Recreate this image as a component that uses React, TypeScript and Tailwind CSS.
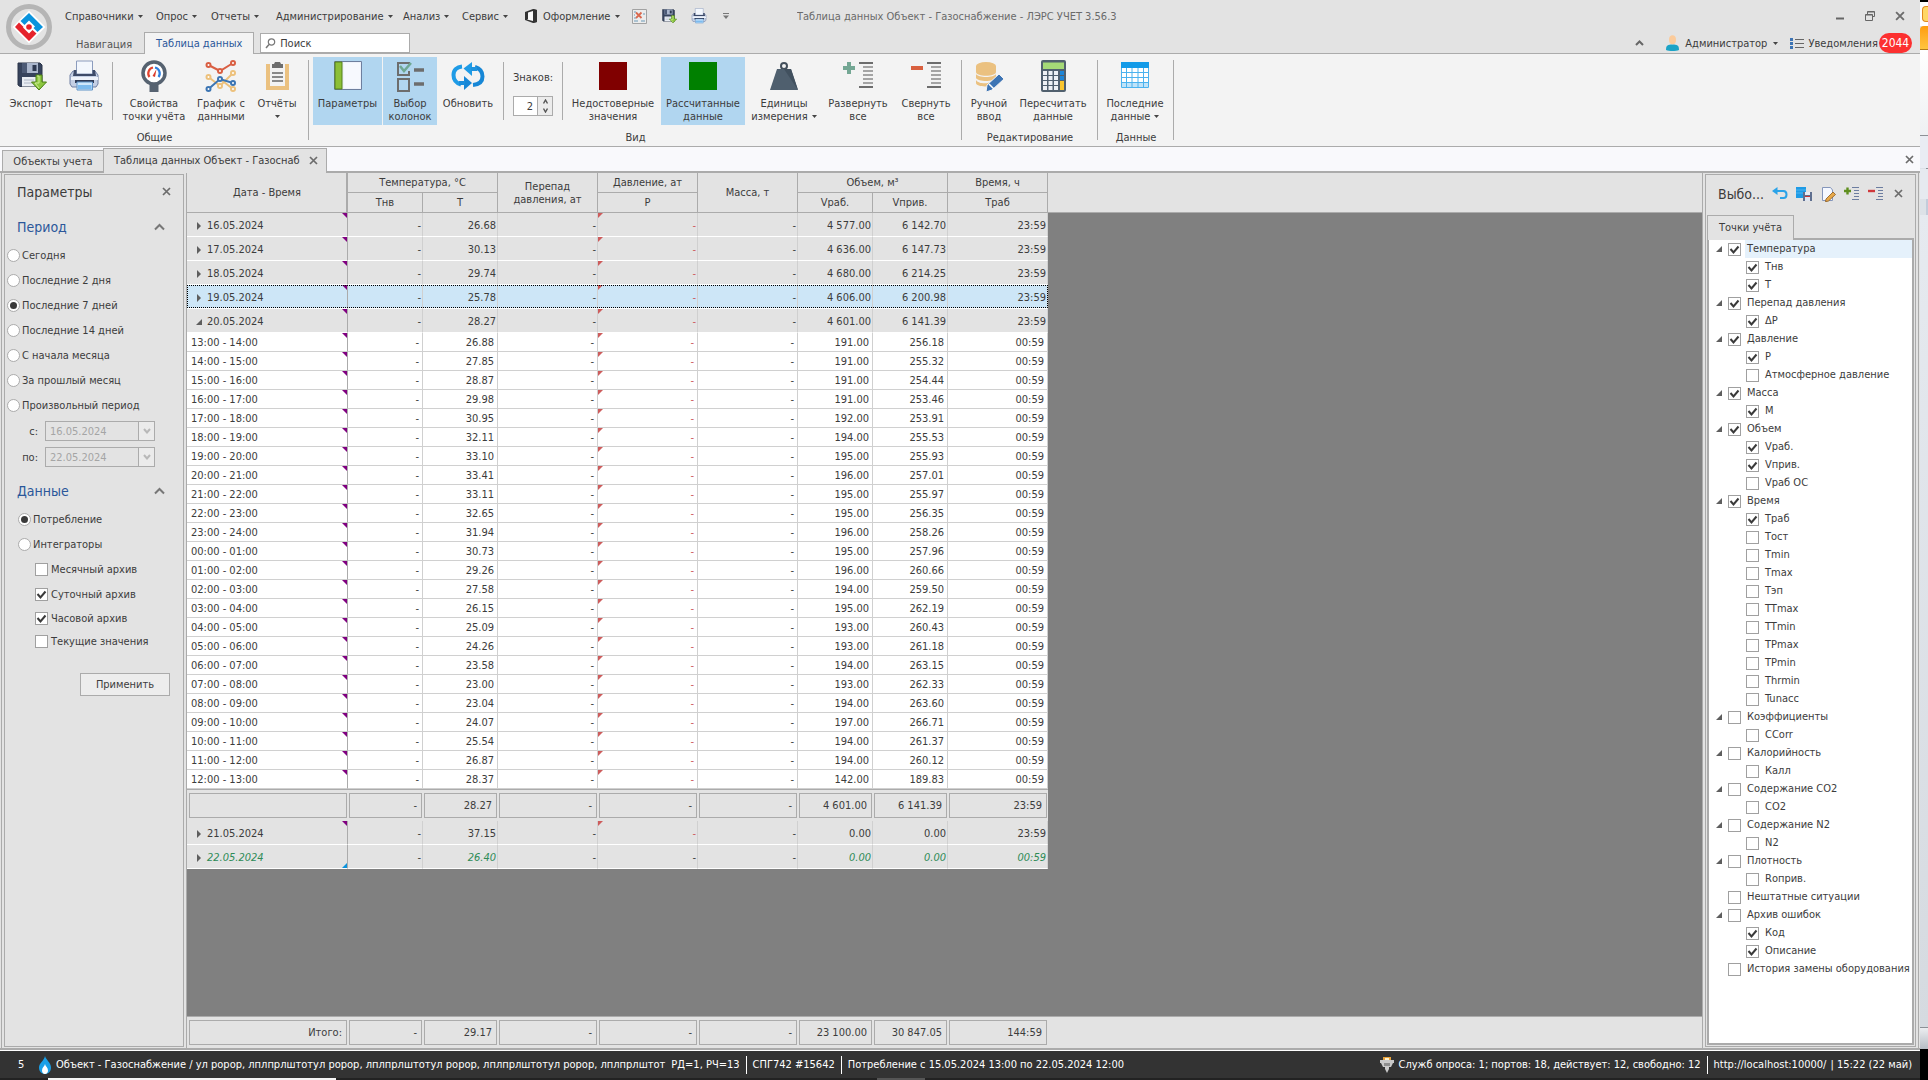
import { ReactNode, useId } from "react";

const FONT = "font-['DejaVu_Sans_Condensed','DejaVu_Sans','Noto_Sans',sans-serif]";

/* ---------- small glyphs ---------- */

function Caret() {
  return (
    <svg width="5" height="3" viewBox="0 0 5 3" className="shrink-0" aria-hidden="true">
      <path d="M0 0h5L2.5 3z" fill="#444" />
    </svg>
  );
}

function Cross({ size = 9 }: { size?: number }) {
  return (
    <svg width={size} height={size} viewBox="0 0 9 9" aria-hidden="true">
      <path d="M1 1l7 7M8 1L1 8" stroke="#6c6c6c" strokeWidth="1.7" fill="none" />
    </svg>
  );
}

function ChevronUp() {
  return (
    <svg width="11" height="8" viewBox="0 0 11 8" aria-hidden="true">
      <path d="M1 6.5L5.5 2 10 6.5" stroke="#777" strokeWidth="2" fill="none" />
    </svg>
  );
}

function Collapsed() {
  return (
    <svg width="5" height="8" viewBox="0 0 5 8" aria-hidden="true">
      <path d="M0 0l4 4-4 4z" fill="#5e5e5e" />
    </svg>
  );
}

function Expanded() {
  return (
    <svg width="6" height="6" viewBox="0 0 6 6" aria-hidden="true">
      <path d="M6 0v6H0z" fill="#5e5e5e" />
    </svg>
  );
}

/* ---------- large icons ---------- */

function LogoIcon() {
  return (
    <svg width="46" height="46" viewBox="0 0 46 46" aria-hidden="true">
      <circle cx="23" cy="23" r="20.5" fill="#e3e3e3" stroke="#b5b5b5" strokeWidth="5" />
      <path d="M23 6.5L39.5 23 23 39.5 6.5 23z" fill="#fff" />
      <path d="M23 9l14 14-5.5 5-4-4 1.5-1.5-6-6-4.5 4.5L14.5 17z" fill="#0a93dd" />
      <path d="M23 37L9 23l4-4.5 4.5 4.5-.5.5 6 6 3.5-3.5 4 3.5z" fill="#e5232c" />
      <circle cx="23" cy="23" r="2.8" fill="#e5232c" />
    </svg>
  );
}

function ExportIcon({ size = 32 }: { size?: number }) {
  return (
    <svg width={size} height={size} viewBox="0 0 32 32" aria-hidden="true">
      <path d="M3 3h22l2 2v21.5H5L3 25z" fill="#36435c" stroke="#2a3449" />
      <path d="M7 3h16v10H7z" fill="#aab6cc" />
      <path d="M7 3h5v10H7z" fill="#4c5a75" />
      <path d="M17.5 5h4v6h-4z" fill="#2d3850" />
      <path d="M7 17h15v9.5H7z" fill="#e9edf3" />
      <path d="M9 20h10M9 23h10" stroke="#b0b8c6" />
      <path d="M21 15h6v7h4.5L24 30l-7.5-8H21z" fill="#8cc63f" stroke="#4a7f16" />
      <path d="M22 16h2v7h-4l4 5" stroke="#cdec97" fill="none" />
    </svg>
  );
}

function PrintIcon({ size = 32 }: { size?: number }) {
  return (
    <svg width={size} height={size} viewBox="0 0 32 32" aria-hidden="true">
      <path d="M5 11h22l3 4v9l-2 3H4l-2-3v-9z" fill="#c4cfe4" stroke="#6f7fa3" />
      <path d="M8.5 1h16v13h-16z" fill="#f3f7fd" stroke="#8c9cbd" />
      <path d="M6 10h2.5v4h16v-4H27l1 6H5z" fill="#3d4a68" />
      <path d="M3 17h27v3H3z" fill="#eef2fa" />
      <path d="M7 20h19v3H7z" fill="#2f3a55" />
      <path d="M9 22h15.5v8H9z" fill="#cfe7fb" stroke="#5f93c8" />
      <path d="M10 25h13.5v4H10z" fill="#7dbbee" />
    </svg>
  );
}

function GaugeIcon() {
  return (
    <svg width="32" height="32" viewBox="0 0 32 32" aria-hidden="true">
      <path d="M11.5 22h9v10h-9z" fill="#566270" />
      <circle cx="16" cy="13" r="11" fill="#fff" stroke="#566270" strokeWidth="3.5" />
      <path d="M11.5 17A6 6 0 0 1 15 7.5" stroke="#e2432f" strokeWidth="2.2" fill="none" />
      <path d="M17 7.5A6 6 0 0 1 20.5 17" stroke="#2e7fe0" strokeWidth="2.2" fill="none" />
      <path d="M14.5 16l4-7-1.5 8z" fill="#d93a2b" />
    </svg>
  );
}

function GraphIcon() {
  return (
    <svg width="32" height="32" viewBox="0 0 32 32" fill="none" strokeWidth="2" aria-hidden="true">
      <path d="M3.5 5L15 11l13-8" stroke="#d95f43" />
      <path d="M3.5 17L15 26l13-13M15 19l13 10" stroke="#edc17c" />
      <path d="M3.5 29L15 19l13 4" stroke="#3c75b3" />
      <g fill="#fff">
        <g stroke="#d95f43"><circle cx="3.5" cy="5" r="2" /><circle cx="15" cy="11" r="2" /><circle cx="28" cy="3" r="2" /></g>
        <g stroke="#edc17c"><circle cx="3.5" cy="17" r="2" /><circle cx="15" cy="26" r="2" /><circle cx="28" cy="13" r="2" /><circle cx="28" cy="29" r="2" /></g>
        <g stroke="#3c75b3"><circle cx="3.5" cy="29" r="2" /><circle cx="15" cy="19" r="2" /><circle cx="28" cy="23" r="2" /></g>
      </g>
    </svg>
  );
}

function ClipboardIcon() {
  return (
    <svg width="32" height="32" viewBox="0 0 32 32" aria-hidden="true">
      <path d="M5 4h23v26H5z" fill="#ebc180" />
      <path d="M9 4h15v22H9z" fill="#f3f3f3" />
      <path d="M11 4h2l1-2h5l1 2h2v4H11z" fill="#6e6e6e" />
      <path d="M11 13h11M11 17h11M11 21h11" stroke="#8a8a8a" strokeWidth="1.8" />
    </svg>
  );
}

function ParamsIcon() {
  return (
    <svg width="32" height="32" viewBox="0 0 32 32" aria-hidden="true">
      <path d="M2.5 1.5h27v28h-27z" fill="#eef2fb" stroke="#6e7f9e" />
      <path d="M3 2h7v27H3z" fill="#8cbf37" stroke="#53801a" />
      <path d="M12 3h16v25H12z" fill="#f7f9fe" />
    </svg>
  );
}

function ColumnsIcon() {
  return (
    <svg width="32" height="32" viewBox="0 0 32 32" fill="none" aria-hidden="true">
      <path d="M15 4V3H4v12h11v-4" stroke="#6d6d6d" strokeWidth="2" />
      <path d="M4 19h11v12H4z" stroke="#6d6d6d" strokeWidth="2" />
      <path d="M6 6l4 5 7-8" stroke="#6fa893" strokeWidth="2.5" />
      <path d="M20 10h10M20 24h10" stroke="#6d6d6d" strokeWidth="3.5" />
    </svg>
  );
}

function RefreshIcon() {
  return (
    <svg width="34" height="32" viewBox="0 0 34 32" aria-hidden="true">
      <path d="M24 7c5 1.5 7.5 5 7.5 9.5 0 5-3.5 8-9.5 8.5" stroke="#1787d6" strokeWidth="4" fill="none" />
      <path d="M10 24.5C5 23 2.5 19.5 2.5 15c0-5 3.5-8 8.5-8.5" stroke="#1e9be6" strokeWidth="4" fill="none" />
      <path d="M21 2v14l-8.5-7.5z" fill="#1e9be6" />
      <path d="M20 7h6v4h-6z" fill="#1e93de" />
      <path d="M13 16v14l8-7z" fill="#1787d6" />
      <path d="M8 21h6v4H8z" fill="#1a8edc" />
    </svg>
  );
}

function Swatch({ tone }: { tone: string }) {
  return <span className={"my-0.5 block h-7 w-7 " + tone} />;
}

function WeightIcon() {
  return (
    <svg width="32" height="32" viewBox="0 0 32 32" aria-hidden="true">
      <circle cx="16" cy="6" r="3" fill="none" stroke="#44505c" strokeWidth="2" />
      <path d="M9 9h14l7 21H2z" fill="#4f5f6e" />
      <path d="M16 9h7l7 21z" fill="#41505e" />
    </svg>
  );
}

function TreeLevels({ open }: { open: boolean }) {
  return (
    <svg width="32" height="32" viewBox="0 0 32 32" fill="none" aria-hidden="true">
      {open ? (
        <path d="M1 8h12M7 2v12" stroke="#74a794" strokeWidth="4" />
      ) : (
        <path d="M1 8h12" stroke="#d9603f" strokeWidth="4" />
      )}
      <path d="M17 3h14M17 27h14" stroke="#6d6d6d" strokeWidth="2" />
      <path d="M21 7h10M21 11h10M21 15h10M21 19h10M21 23h10" stroke="#8b8b8b" strokeWidth="1.6" />
    </svg>
  );
}

function ManualIcon() {
  return (
    <svg width="32" height="32" viewBox="0 0 32 32" aria-hidden="true">
      <path d="M3 6v6c0 5 20 5 20 0V6z" fill="#ebc180" />
      <ellipse cx="13" cy="6" rx="10" ry="4" fill="#ebc180" />
      <path d="M3 14c2 4 18 4 20 0v4c-2 4-18 4-20 0z" fill="#ebc180" />
      <path d="M3 20c2 4 12 4 14 2l-1 4c-5 1-13 0-13-3z" fill="#ebc180" />
      <path d="M14 25L26 14l5 5-12 11-6 2z" fill="#3d74b4" stroke="#f3f3f3" />
      <path d="M16 24l5 5" stroke="#fff" strokeWidth="1.5" />
    </svg>
  );
}

function CalculatorIcon() {
  return (
    <svg width="32" height="32" viewBox="0 0 32 32" aria-hidden="true">
      <rect x="4" y="0" width="25" height="32" rx="2" fill="#51606e" />
      <path d="M6 2.5h21V9H6z" fill="#a5d977" />
      <g fill="#eef1f4">
        {[11, 16, 21, 26].map((y) => (
          <g key={y}>
            <path d={"M6 " + y + "h4v4H6z"} />
            <path d={"M11.5 " + y + "h4v4h-4z"} />
            <path d={"M17 " + y + "h4v4h-4z"} />
          </g>
        ))}
      </g>
      <path d="M23 11h4v4h-4zM23 16h4v4h-4z" fill="#1d86d9" />
      <path d="M23 21h4v9h-4z" fill="#fbc62f" />
    </svg>
  );
}

function TableIcon() {
  return (
    <svg width="32" height="32" viewBox="0 0 32 32" aria-hidden="true">
      <path d="M2 2h28v26H2z" fill="#fff" />
      <path d="M2 2h28v6H2z" fill="#139be8" />
      <path d="M2.5 8v19.5h27V8M2 12.5h28M2 17.5h28M2 22.5h28M7.5 8v20M13 8v20M19 8v20M24.5 8v20" stroke="#4bb2ee" fill="none" />
      <path d="M3 23h26v4H3z" fill="#bfe3f9" />
      <path d="M7.5 23v4M13 23v4M19 23v4M24.5 23v4" stroke="#4bb2ee" />
    </svg>
  );
}

/* ---------- ribbon ---------- */

function RibbonButton({ icon, lines, width, active, drop }: { icon: ReactNode; lines: string[]; width: string; active?: boolean; drop?: boolean }) {
  return (
    <button type="button" className={"flex h-[68px] shrink-0 flex-col items-center pt-[3px] leading-[13px] " + width + (active ? " bg-[#b1d6f0]" : "")}>
      <span className="mb-[5px] flex h-8 items-start justify-center">{icon}</span>
      <span className="whitespace-nowrap">{lines[0]}</span>
      <span className="flex h-[13px] items-center gap-1 whitespace-nowrap">
        {lines[1]}
        {drop && <Caret />}
      </span>
    </button>
  );
}

function RibbonGroup({ label, width, children }: { label: string; width: string; children: ReactNode }) {
  return (
    <section className={"relative flex shrink-0 flex-col pt-[3px] " + width}>
      <div className="flex">{children}</div>
      <h2 className="mt-1.5 text-center leading-[13px]">{label}</h2>
      <span className="absolute right-0 top-1.5 h-20 w-px bg-[#ababab]" />
    </section>
  );
}

function InnerSep({ className }: { className: string }) {
  return <span className={"mt-[5px] h-[58px] w-px shrink-0 bg-[#ababab] " + className} />;
}

function Ribbon() {
  return (
    <div className="flex h-[93px] shrink-0 overflow-hidden border-b border-[#ababab] bg-[#f3f3f3]">
      <RibbonGroup label="Общие" width="w-[309px]">
        <RibbonButton icon={<ExportIcon />} lines={["Экспорт"]} width="ml-1 w-[54px]" />
        <RibbonButton icon={<PrintIcon />} lines={["Печать"]} width="w-[52px]" />
        <InnerSep className="mx-0.5" />
        <RibbonButton icon={<GaugeIcon />} lines={["Свойства", "точки учёта"]} width="w-[78px]" />
        <RibbonButton icon={<GraphIcon />} lines={["График с", "данными"]} width="w-14" />
        <RibbonButton icon={<ClipboardIcon />} lines={["Отчёты"]} drop width="w-14" />
      </RibbonGroup>
      <RibbonGroup label="Вид" width="w-[653px]">
        <RibbonButton icon={<ParamsIcon />} lines={["Параметры"]} active width="ml-1 w-[69px]" />
        <RibbonButton icon={<ColumnsIcon />} lines={["Выбор", "колонок"]} active width="ml-px w-[54px]" />
        <RibbonButton icon={<RefreshIcon />} lines={["Обновить"]} width="w-[62px]" />
        <InnerSep className="ml-1" />
        <div className="flex w-[58px] flex-col pl-[9px]">
          <label htmlFor="digits" className="mt-3.5 leading-[13px]">Знаков:</label>
          <div className="mt-3 flex h-5 w-10 border border-[#ababab] bg-white">
            <input id="digits" defaultValue="2" className="w-[23px] bg-transparent pr-1 text-right outline-none" />
            <div className="flex flex-1 flex-col items-center justify-around border-l border-[#ababab] bg-[#ececec]">
              <button type="button" aria-label="Больше" className="leading-none">
                <svg width="5" height="5" viewBox="0 0 5 5"><path d="M.5 4.5l2-3.5 2 3.5" stroke="#555" strokeWidth="1.4" fill="none" /></svg>
              </button>
              <button type="button" aria-label="Меньше" className="leading-none">
                <svg width="5" height="5" viewBox="0 0 5 5"><path d="M.5.5l2 3.5 2-3.5" stroke="#555" strokeWidth="1.4" fill="none" /></svg>
              </button>
            </div>
          </div>
        </div>
        <InnerSep className="mr-0.5" />
        <RibbonButton icon={<Swatch tone="bg-[#800000]" />} lines={["Недостоверные", "значения"]} width="w-24" />
        <RibbonButton icon={<Swatch tone="bg-[#008000]" />} lines={["Рассчитанные", "данные"]} active width="w-[84px]" />
        <RibbonButton icon={<WeightIcon />} lines={["Единицы", "измерения"]} drop width="w-[78px]" />
        <RibbonButton icon={<TreeLevels open />} lines={["Развернуть", "все"]} width="w-[70px]" />
        <RibbonButton icon={<TreeLevels open={false} />} lines={["Свернуть", "все"]} width="w-[66px]" />
      </RibbonGroup>
      <RibbonGroup label="Редактирование" width="w-[136px]">
        <RibbonButton icon={<ManualIcon />} lines={["Ручной", "ввод"]} width="w-[54px]" />
        <RibbonButton icon={<CalculatorIcon />} lines={["Пересчитать", "данные"]} width="w-[74px]" />
      </RibbonGroup>
      <RibbonGroup label="Данные" width="w-[76px]">
        <RibbonButton icon={<TableIcon />} lines={["Последние", "данные"]} drop width="w-[74px]" />
      </RibbonGroup>
    </div>
  );
}

/* ---------- title bar ---------- */

const MENU: [string, string][] = [
  ["Справочники", "w-[91px]"],
  ["Опрос", "w-[55px]"],
  ["Отчеты", "w-[65px]"],
  ["Администрирование", "w-[127px]"],
  ["Анализ", "w-[59px]"],
  ["Сервис", "w-[63px]"],
];

function TitleBar() {
  return (
    <header className="flex h-[54px] shrink-0 border-b border-[#ababab] bg-[#e3e3e3]">
      <button type="button" aria-label="ЛЭРС УЧЕТ" className="ml-1.5 mt-1 size-[46px] shrink-0">
        <LogoIcon />
      </button>
      <div className="flex min-w-0 flex-1 flex-col">
        <div className="flex h-8 items-center">
          <nav className="ml-[13px] flex shrink-0">
            {MENU.map(([name, width]) => (
              <button key={name} type="button" className={"flex items-center gap-1 whitespace-nowrap " + width}>
                {name}
                <Caret />
              </button>
            ))}
            <button type="button" className="flex w-[107px] items-center gap-[5px] whitespace-nowrap">
              <svg width="13" height="14" viewBox="0 0 13 14" aria-hidden="true">
                <path d="M0 3l8-3 4 1v12l-4 1-8-3V3z" fill="#333" />
                <path d="M3 3.5L8 2v10l-6-1.5 1-.5z" fill="#fafafa" />
                <path d="M8 0l4 1v12l-4 1z" fill="#333" />
              </svg>
              Оформление
              <Caret />
            </button>
          </nav>
          <div className="flex shrink-0 items-center gap-3.5">
            <button type="button" aria-label="Закрыть отчёты">
              <svg width="15" height="15" viewBox="0 0 15 15"><path d="M.5.5h14v14H.5z" fill="#ececec" stroke="#a2a2a2" /><path d="M4 3.5L9.5 9M9.5 3.5L4 9" stroke="#d9694f" strokeWidth="1.8" /><path d="M2 3h2M2 6h1M2 9h2M2 12h4M9 12h4M11 5h2" stroke="#6b9ab8" /></svg>
            </button>
            <button type="button" aria-label="Экспорт"><ExportIcon size={16} /></button>
            <button type="button" aria-label="Печать"><PrintIcon size={16} /></button>
            <button type="button" aria-label="Настройка панели" className="ml-0.5">
              <svg width="6" height="6" viewBox="0 0 6 6"><path d="M0 .5h6" stroke="#777" /><path d="M0 2.5h6L3 6z" fill="#777" /></svg>
            </button>
          </div>
          <h1 className="ml-[68px] truncate text-[#6a6a6a]">Таблица данных Объект - Газоснабжение - ЛЭРС УЧЕТ 3.56.3</h1>
          <div className="ml-auto flex shrink-0 items-center gap-5 pr-[15px]">
            <button type="button" aria-label="Свернуть окно">
              <svg width="10" height="10" viewBox="0 0 10 10"><path d="M1 7.5h8" stroke="#666" strokeWidth="2" /></svg>
            </button>
            <button type="button" aria-label="Восстановить окно">
              <svg width="10" height="10" viewBox="0 0 10 10"><path d="M2.5 3V.5h7v5h-2M.5 3.5h7v6h-7zM.5 4h7M2.5 1h7" stroke="#666" fill="none" /></svg>
            </button>
            <button type="button" aria-label="Закрыть окно"><Cross size={10} /></button>
          </div>
        </div>
        <div className="flex h-[21px] items-end">
          <button type="button" className="ml-6 pb-0.5 leading-[13px] text-[#555]">Навигация</button>
          <button type="button" className="relative -mb-px ml-3 h-[22px] w-[110px] shrink-0 border border-b-0 border-[#ababab] bg-[#f3f3f3] text-[#2b579a]">
            Таблица данных
          </button>
          <label className="ml-1.5 flex h-5 w-[150px] shrink-0 items-center gap-1 border border-[#ababab] bg-white px-1">
            <svg width="11" height="11" viewBox="0 0 11 11" fill="none" aria-hidden="true"><circle cx="6.5" cy="4" r="3.2" stroke="#777" strokeWidth="1.2" /><path d="M4 6.5L1 10" stroke="#777" strokeWidth="1.5" /></svg>
            <input placeholder="Поиск" aria-label="Поиск" className="min-w-0 flex-1 bg-transparent outline-none placeholder:text-[#3c3c3c]" />
          </label>
          <div className="ml-auto flex shrink-0 items-center pr-2">
            <button type="button" aria-label="Свернуть ленту" className="mr-[22px]">
              <svg width="9" height="6" viewBox="0 0 9 6"><path d="M1 5l3.5-3.5L8 5" stroke="#666" strokeWidth="2" fill="none" /></svg>
            </button>
            <button type="button" className="mr-3 flex items-center gap-1.5">
              <svg width="13" height="16" viewBox="0 0 13 16" aria-hidden="true"><path d="M0 15c0-5 2-5.5 6.5-5.5S13 10 13 15c-3 1.300-10 1.300-13 0z" fill="#1ba3c6" /><ellipse cx="6.5" cy="4.8" rx="3.5" ry="4.5" fill="#fbcb9b" /></svg>
              Администратор
              <Caret />
            </button>
            <button type="button" className="flex items-center">
              <svg width="14" height="11" viewBox="0 0 14 11" className="mr-1" aria-hidden="true"><path d="M5 1.5h9M5 5.5h9M5 9.5h9" stroke="#666" /><path d="M0 0h3v3H0zM0 4h3v3H0zM0 8h3v3H0z" fill="#3d74b4" /></svg>
              Уведомления
              <span className="ml-px flex h-5 w-[33px] items-center justify-center rounded-full bg-[#fc3030] text-xs text-white">2044</span>
            </button>
          </div>
        </div>
      </div>
    </header>
  );
}

function DocumentTabs() {
  return (
    <div className="flex h-6 shrink-0 items-end bg-[#f9f9fc] pl-0.5">
      <button type="button" className="h-[21px] w-[102px] shrink-0 border border-b-0 border-[#ababab] bg-[#e3e3e3]">Объекты учета</button>
      <div className="relative -mb-0.5 -ml-px flex h-[25px] w-[224px] shrink-0 items-center border border-b-0 border-[#ababab] bg-[#e3e3e3] pb-0.5 pl-2.5">
        <button type="button" className="whitespace-nowrap">Таблица данных Объект - Газоснаб</button>
        <button type="button" aria-label="Закрыть вкладку" className="ml-auto mr-2"><Cross /></button>
      </div>
      <button type="button" aria-label="Закрыть документ" className="mb-[7px] ml-auto mr-1.5"><Cross /></button>
    </div>
  );
}

/* ---------- form controls ---------- */

function CheckBox({ id, checked }: { id: string; checked: boolean }) {
  return (
    <span className="relative block size-[13px] shrink-0">
      <input id={id} type="checkbox" defaultChecked={checked} className="peer block size-[13px] appearance-none border border-[#a0a0a0] bg-white" />
      <svg viewBox="0 0 13 13" className="pointer-events-none absolute inset-0 hidden size-[13px] peer-checked:block" aria-hidden="true">
        <path d="M2.5 6l3 3.5 5-6" stroke="#3a3a3a" strokeWidth="2" fill="none" />
      </svg>
    </span>
  );
}

function CheckRow({ label, checked, height }: { label: string; checked: boolean; height: string }) {
  const id = useId();
  return (
    <div className={"flex items-center gap-[3px] pl-[30px] " + height}>
      <CheckBox id={id} checked={checked} />
      <label htmlFor={id}>{label}</label>
    </div>
  );
}

function RadioRow({ name, label, checked, indent }: { name: string; label: string; checked?: boolean; indent: string }) {
  const id = useId();
  return (
    <div className={"flex h-[25px] items-center gap-0.5 " + indent}>
      <span className="relative block size-[13px] shrink-0">
        <input id={id} type="radio" name={name} defaultChecked={checked} className="peer block size-[13px] appearance-none rounded-full border border-[#ababab] bg-white" />
        <span className="pointer-events-none absolute inset-[3px] hidden rounded-full bg-[#3a3a3a] peer-checked:block" />
      </span>
      <label htmlFor={id}>{label}</label>
    </div>
  );
}

function DateRow({ label, value }: { label: string; value: string }) {
  const id = useId();
  return (
    <div className="flex h-[26px] items-center">
      <label htmlFor={id} className="mr-[7px] w-[33px] text-right">{label}</label>
      <div className="flex h-5 w-[110px] border border-[#ababab]">
        <input id={id} disabled defaultValue={value} className="w-[92px] bg-transparent pl-1 text-[#a5a5a5]" />
        <button type="button" disabled aria-label="Выбрать дату" className="flex flex-1 items-center justify-center border-l border-[#ababab] bg-[#ebebeb]">
          <svg width="8" height="6" viewBox="0 0 8 6"><path d="M1 1l3 3.5L7 1" stroke="#b8b8b8" strokeWidth="2" fill="none" /></svg>
        </button>
      </div>
    </div>
  );
}

function SectionHead({ title, className }: { title: string; className: string }) {
  return (
    <div className={"flex h-8 items-center justify-between pl-3 pr-[18px] text-sm text-[#2b579a] " + className}>
      <h3>{title}</h3>
      <button type="button" aria-label={"Свернуть " + title}><ChevronUp /></button>
    </div>
  );
}

function ParametersPanel() {
  const periods = ["Сегодня", "Последние 2 дня", "Последние 7 дней", "Последние 14 дней", "С начала месяца", "За прошлый месяц", "Произвольный период"];
  return (
    <aside className="ml-px flex w-[185px] shrink-0 border-l border-[#ababab] px-0.5 py-px">
      <form className="w-[180px] border border-[#ababab]" onSubmit={(e) => e.preventDefault()}>
        <div className="flex h-[33px] items-center justify-between px-3">
          <h2 className="text-sm">Параметры</h2>
          <button type="button" aria-label="Закрыть параметры"><Cross /></button>
        </div>
        <SectionHead title="Период" className="mt-[3px]" />
        {periods.map((p) => (
          <RadioRow key={p} name="period" label={p} checked={p === "Последние 7 дней"} indent="pl-0.5" />
        ))}
        <DateRow label="с:" value="16.05.2024" />
        <DateRow label="по:" value="22.05.2024" />
        <SectionHead title="Данные" className="mt-[5px]" />
        <RadioRow name="kind" label="Потребление" checked indent="pl-[13px]" />
        <RadioRow name="kind" label="Интеграторы" indent="pl-[13px]" />
        <CheckRow label="Месячный архив" checked={false} height="h-[25px]" />
        <CheckRow label="Суточный архив" checked height="h-[25px]" />
        <CheckRow label="Часовой архив" checked height="h-[23px]" />
        <CheckRow label="Текущие значения" checked={false} height="h-[23px]" />
        <button type="submit" className="ml-[75px] mt-5 h-[23px] w-[90px] border border-[#ababab] bg-[#ededed]">Применить</button>
      </form>
    </aside>
  );
}

/* ---------- data grid ---------- */

const HOURS: [string, string, string, string][] = [
  ["13:00 - 14:00", "26.88", "191.00", "256.18"],
  ["14:00 - 15:00", "27.85", "191.00", "255.32"],
  ["15:00 - 16:00", "28.87", "191.00", "254.44"],
  ["16:00 - 17:00", "29.98", "191.00", "253.46"],
  ["17:00 - 18:00", "30.95", "192.00", "253.91"],
  ["18:00 - 19:00", "32.11", "194.00", "255.53"],
  ["19:00 - 20:00", "33.10", "195.00", "255.93"],
  ["20:00 - 21:00", "33.41", "196.00", "257.01"],
  ["21:00 - 22:00", "33.11", "195.00", "255.97"],
  ["22:00 - 23:00", "32.65", "195.00", "256.35"],
  ["23:00 - 24:00", "31.94", "196.00", "258.26"],
  ["00:00 - 01:00", "30.73", "195.00", "257.96"],
  ["01:00 - 02:00", "29.26", "196.00", "260.66"],
  ["02:00 - 03:00", "27.58", "194.00", "259.50"],
  ["03:00 - 04:00", "26.15", "195.00", "262.19"],
  ["04:00 - 05:00", "25.09", "193.00", "260.43"],
  ["05:00 - 06:00", "24.26", "193.00", "261.18"],
  ["06:00 - 07:00", "23.58", "194.00", "263.15"],
  ["07:00 - 08:00", "23.00", "193.00", "262.33"],
  ["08:00 - 09:00", "23.04", "194.00", "263.60"],
  ["09:00 - 10:00", "24.07", "197.00", "266.71"],
  ["10:00 - 11:00", "25.54", "194.00", "261.37"],
  ["11:00 - 12:00", "26.87", "194.00", "260.12"],
  ["12:00 - 13:00", "28.37", "142.00", "189.83"],
];

function Columns() {
  return (
    <colgroup>
      <col className="w-[161px]" />
      <col className="w-[75px]" />
      <col className="w-[75px]" />
      <col className="w-[100px]" />
      <col className="w-[100px]" />
      <col className="w-[100px]" />
      <col className="w-[75px]" />
      <col className="w-[75px]" />
      <col className="w-[100px]" />
      <col />
    </colgroup>
  );
}

function DateMark() {
  return <span className="absolute right-0 top-0 size-[5px] bg-[#800080] [clip-path:polygon(0_0,100%_0,100%_100%)]" />;
}

function PressureMark() {
  return <span className="absolute left-0 top-0 size-[5px] bg-[#cd5c5c] [clip-path:polygon(0_0,100%_0,0_100%)]" />;
}

type Day = { date: string; t: string; v: string; vn: string; time: string; open?: boolean; selected?: boolean; partial?: boolean };

function DayRow({ d }: { d: Day }) {
  const cell = "h-6 border-b border-r border-b-white border-r-[#d0d0d0] px-px pb-0 pt-0.5 text-right";
  const tone = d.partial ? "italic text-[#2e8b57]" : "";
  return (
    <tr className={d.selected ? "bg-[#cde6f7]" : "bg-[#e3e3e3]"}>
      <th scope="row" className="relative h-6 border-b border-r border-b-white border-r-[#ababab] p-0 pt-0.5 text-left font-normal">
        <span className="flex items-center">
          <span className={"flex w-5 items-center " + (d.open ? "pl-[9px]" : "pl-2.5")}>{d.open ? <Expanded /> : <Collapsed />}</span>
          <span className={tone}>{d.date}</span>
        </span>
        {d.partial ? (
          <span className="absolute bottom-0 right-0 size-[5px] bg-[#0a93dd] [clip-path:polygon(100%_0,100%_100%,0_100%)]" />
        ) : (
          <DateMark />
        )}
        {d.selected && <span className="pointer-events-none absolute left-0 top-0 z-10 h-[23px] w-[861px] border border-dotted border-black" />}
      </th>
      <td className={cell}>-</td>
      <td className={cell + " " + tone}>{d.t}</td>
      <td className={cell}>-</td>
      <td className={cell + " relative" + (d.partial ? "" : " text-[#cd5c5c]")}>
        -{!d.partial && <PressureMark />}
      </td>
      <td className={cell}>-</td>
      <td className={cell + " " + tone}>{d.v}</td>
      <td className={cell + " " + tone}>{d.vn}</td>
      <td className={cell + " " + tone}>{d.time}</td>
      <td className="bg-[#808080] p-0" />
    </tr>
  );
}

function HourRow({ h }: { h: [string, string, string, string] }) {
  const cell = "h-[19px] border-b border-r border-[#d0d0d0] p-0 pr-[3px] text-right";
  return (
    <tr className="bg-white">
      <th scope="row" className="relative h-[19px] border-b border-r border-b-[#d0d0d0] border-r-[#ababab] p-0 pl-1 text-left font-normal">
        {h[0]}
        <DateMark />
      </th>
      <td className={cell}>-</td>
      <td className={cell}>{h[1]}</td>
      <td className={cell}>-</td>
      <td className={cell + " relative text-[#cd5c5c]"}>
        -<PressureMark />
      </td>
      <td className={cell}>-</td>
      <td className={cell}>{h[2]}</td>
      <td className={cell}>{h[3]}</td>
      <td className={cell}>00:59</td>
      <td className="bg-[#808080] p-0" />
    </tr>
  );
}

function SummaryRow({ values, tail }: { values: string[]; tail: string }) {
  return (
    <tr className="bg-[#e3e3e3]">
      {values.map((v, i) => (
        <td key={i} className={"h-8 border-t border-t-[#ababab] py-0 pr-px text-right " + (i === 0 ? "pl-0.5" : "pl-px")}>
          <div className="h-[25px] border border-[#ababab] pr-1 leading-[23px]">{v}</div>
        </td>
      ))}
      <td className={"p-0 " + tail} />
    </tr>
  );
}

function DataGrid() {
  const head = "h-5 border-b border-r border-[#ababab] p-0 font-normal";
  return (
    <main className="flex min-w-0 flex-1 flex-col border-l border-[#ababab] bg-[#808080]">
      <div className="flex-1">
        <table className="w-full table-fixed border-separate border-spacing-0 leading-[13px]">
          <Columns />
          <thead className="bg-[#e3e3e3]">
            <tr>
              <th rowSpan={2} scope="col" className={head + " shadow-[inset_-1px_0_#ababab]"}>Дата - Время</th>
              <th colSpan={2} scope="colgroup" className={head}>Температура, °C</th>
              <th rowSpan={2} scope="col" className={head}>Перепад<br />давления, ат</th>
              <th scope="colgroup" className={head}>Давление, ат</th>
              <th rowSpan={2} scope="col" className={head}>Масса, т</th>
              <th colSpan={2} scope="colgroup" className={head}>Объем, м³</th>
              <th scope="colgroup" className={head}>Время, ч</th>
              <td rowSpan={2} className="border-b border-[#ababab] p-0" />
            </tr>
            <tr>
              <th scope="col" className={head}>Tнв</th>
              <th scope="col" className={head}>T</th>
              <th scope="col" className={head}>P</th>
              <th scope="col" className={head}>Vраб.</th>
              <th scope="col" className={head}>Vприв.</th>
              <th scope="col" className={head}>Tраб</th>
            </tr>
          </thead>
          <tbody>
            <DayRow d={{ date: "16.05.2024", t: "26.68", v: "4 577.00", vn: "6 142.70", time: "23:59" }} />
            <DayRow d={{ date: "17.05.2024", t: "30.13", v: "4 636.00", vn: "6 147.73", time: "23:59" }} />
            <DayRow d={{ date: "18.05.2024", t: "29.74", v: "4 680.00", vn: "6 214.25", time: "23:59" }} />
            <DayRow d={{ date: "19.05.2024", t: "25.78", v: "4 606.00", vn: "6 200.98", time: "23:59", selected: true }} />
            <DayRow d={{ date: "20.05.2024", t: "28.27", v: "4 601.00", vn: "6 141.39", time: "23:59", open: true }} />
            {HOURS.map((h) => (
              <HourRow key={h[0]} h={h} />
            ))}
            <SummaryRow values={["", "-", "28.27", "-", "-", "-", "4 601.00", "6 141.39", "23:59"]} tail="bg-[#808080]" />
            <DayRow d={{ date: "21.05.2024", t: "37.15", v: "0.00", vn: "0.00", time: "23:59" }} />
            <DayRow d={{ date: "22.05.2024", t: "26.40", v: "0.00", vn: "0.00", time: "00:59", partial: true }} />
          </tbody>
        </table>
      </div>
      <table className="w-full table-fixed border-separate border-spacing-0 leading-[13px]">
        <Columns />
        <tbody>
          <SummaryRow values={["Итого:", "-", "29.17", "-", "-", "-", "23 100.00", "30 847.05", "144:59"]} tail="border-t border-[#ababab]" />
        </tbody>
      </table>
    </main>
  );
}

/* ---------- column chooser ---------- */

type Node = { name: string; on?: boolean; items?: [string, boolean][] };

const TREE: Node[] = [
  { name: "Температура", on: true, items: [["Tнв", true], ["T", true]] },
  { name: "Перепад давления", on: true, items: [["ΔP", true]] },
  { name: "Давление", on: true, items: [["P", true], ["Атмосферное давление", false]] },
  { name: "Масса", on: true, items: [["M", true]] },
  { name: "Объем", on: true, items: [["Vраб.", true], ["Vприв.", true], ["Vраб ОС", false]] },
  {
    name: "Время",
    on: true,
    items: [["Tраб", true], ["Tост", false], ["Tmin", false], ["Tmax", false], ["Tэп", false], ["TTmax", false], ["TTmin", false], ["TPmax", false], ["TPmin", false], ["Thrmin", false], ["Tunacc", false]],
  },
  { name: "Коэффициенты", items: [["CCorr", false]] },
  { name: "Калорийность", items: [["Калл", false]] },
  { name: "Содержание CO2", items: [["CO2", false]] },
  { name: "Содержание N2", items: [["N2", false]] },
  { name: "Плотность", items: [["Rоприв.", false]] },
  { name: "Нештатные ситуации" },
  { name: "Архив ошибок", items: [["Код", true], ["Описание", true]] },
  { name: "История замены оборудования" },
];

function TreeRow({ name, checked, child, branch, current }: { name: string; checked: boolean; child?: boolean; branch?: boolean; current?: boolean }) {
  const id = useId();
  return (
    <div className={"flex h-[18px] items-center " + (child ? "pl-[37px]" : "")}>
      {!child && <span className="flex w-[19px] shrink-0 pl-[7px]">{branch && <Expanded />}</span>}
      <CheckBox id={id} checked={checked} />
      <label htmlFor={id} className={"ml-1 h-full flex-1 whitespace-nowrap pl-0.5 leading-[18px] " + (current ? "bg-[#e5f1fb]" : "")}>{name}</label>
    </div>
  );
}

function ColumnChooser() {
  return (
    <aside className="mr-px flex w-[217px] shrink-0 border-x border-[#ababab] px-0.5 py-px">
      <div className="flex w-[211px] flex-col border border-[#ababab] px-px pb-px">
        <div className="flex h-10 shrink-0 items-center justify-between pb-[3px] pl-[11px] pr-[11px]">
          <h2 className="text-sm">Выбо...</h2>
          <div className="flex items-center gap-2">
            <button type="button" aria-label="Отменить">
              <svg width="16" height="16" viewBox="0 0 16 16" fill="none"><path d="M3 5h8.500c2 0 3 1.500 3 3.500s-1 3.500-3 3.500H8" stroke="#2ba3e8" strokeWidth="2" /><path d="M5.5 1L0 5l5.500 4z" fill="#2ba3e8" /></svg>
            </button>
            <button type="button" aria-label="Сохранить">
              <svg width="16" height="16" viewBox="0 0 16 16"><path d="M0 1h10v11H0z" fill="#1e9be6" /><path d="M0 4h10M0 7h10" stroke="#4fb4ef" /><path d="M7 6h9v9H7z" fill="#5f6f8f" /><path d="M9 6h5v3H9z" fill="#e9edf5" /><path d="M9 11h5v4H9z" fill="#dfe5ef" /><path d="M9 10h5v1H9z" fill="#c33" /></svg>
            </button>
            <button type="button" aria-label="Изменить">
              <svg width="16" height="16" viewBox="0 0 16 16"><path d="M2.5 1.5h8l2 2.500v10.500h-10z" fill="#f5f8ff" stroke="#8596bb" /><path d="M6 13l7-7 2.500 2.500-7 6.500-3 .8z" fill="#e8a94a" stroke="#8a5a20" strokeWidth=".8" /></svg>
            </button>
            <button type="button" aria-label="Развернуть все">
              <svg width="16" height="16" viewBox="0 0 16 16" fill="none"><path d="M0 5h7M3.5 1.5v7" stroke="#5f8f1f" strokeWidth="2.4" /><path d="M8 1.5h7M10 4.5h5M10 7.5h5M10 10.5h5M8 13.5h7" stroke="#6c7da0" /></svg>
            </button>
            <button type="button" aria-label="Свернуть все">
              <svg width="16" height="16" viewBox="0 0 16 16" fill="none"><path d="M0 5h7" stroke="#d0393c" strokeWidth="2.4" /><path d="M8 1.5h7M10 4.5h5M10 7.5h5M10 10.5h5M8 13.5h7" stroke="#6c7da0" /></svg>
            </button>
            <button type="button" aria-label="Закрыть выбор колонок" className="ml-0.5"><Cross /></button>
          </div>
        </div>
        <button type="button" className="relative z-10 -mb-0.5 h-[25px] w-[87px] shrink-0 border border-b-0 border-[#ababab] bg-[#e3e3e3] pb-0.5">Точки учёта</button>
        <div className="flex-1 overflow-hidden border-2 border-[#ababab] bg-white">
          {TREE.map((n, i) => (
            <div key={n.name}>
              <TreeRow name={n.name} checked={!!n.on} branch={!!n.items} current={i === 0} />
              {n.items?.map(([name, on]) => (
                <TreeRow key={name} name={name} checked={on} child />
              ))}
            </div>
          ))}
        </div>
      </div>
    </aside>
  );
}

/* ---------- status bar ---------- */

function StatusBar() {
  const bar = "mx-1.5 h-[18px] w-px shrink-0 bg-white";
  return (
    <footer className="shrink-0">
      <div className="flex h-7 items-center whitespace-nowrap border-t border-white bg-[#333] text-white">
        <span className="w-[38px] pl-[18px]">5</span>
        <svg width="14" height="18" viewBox="0 0 14 18" className="mr-1 shrink-0" aria-hidden="true">
          <path d="M7 0c1 4 6 6.500 6 11.500C13 15.500 10.500 18 7 18s-6-2.500-6-6.500C1 7 6 5 7 0z" fill="#1a9fe6" />
          <path d="M7 8c.5 2.500 3 3.500 3 6.500 0 2-1.300 3.500-3 3.500s-3-1.500-3-3.500C4 11.500 6.500 10.500 7 8z" fill="#fff" />
        </svg>
        <span>Объект - Газоснабжение / ул ророр, лплпрлштотул ророр, лплпрлштотул ророр, лплпрлштотул ророр, лплпрлштот</span>
        <span className="ml-1.5">РД=1, РЧ=13</span>
        <span className={bar} />
        <span>СПГ742 #15642</span>
        <span className={bar} />
        <span>Потребление с 15.05.2024 13:00 по 22.05.2024 12:00</span>
        <svg width="14" height="16" viewBox="0 0 14 16" className="ml-auto mr-1 shrink-0" aria-hidden="true">
          <path d="M3 0h8v4H3z" fill="#e9a33b" />
          <path d="M5 1h4v3H5z" fill="#fff3d0" />
          <path d="M0 3h14v3h-1l-2 4H9v2l-2 4-2-4v-2H3L1 6H0z" fill="#c9c9c9" />
          <path d="M4 6h6v3H4z" fill="#8d8d8d" />
        </svg>
        <span>Служб опроса: 1; портов: 18, действует: 12, свободно: 12</span>
        <span className={bar} />
        <a href="http://localhost:10000/">http://localhost:10000/</a>
        <span className="ml-1 mr-2">| 15:22 (22 май)</span>
      </div>
      <div className="flex h-0.5 bg-[#222]">
        <span className="ml-12 w-72 bg-[#f5f5f5]" />
        <span className="ml-[541px] w-12 bg-[#555]" />
      </div>
    </footer>
  );
}

/* Edge of the window that lies behind the application. */
function BackWindowEdge() {
  return (
    <div className="flex w-2 shrink-0 flex-col bg-[#dde2e8]" aria-hidden="true">
      <div className="h-0.5 bg-black" />
      <div className="flex h-6 items-center bg-white pl-0.5">
        <div className="h-4 w-1.5 rounded-l border border-r-0 border-[#e08a1e] bg-[#ffd766]" />
      </div>
      <div className="h-6 rounded-tl border-b border-[#b07a1a] bg-linear-to-b from-[#ff9c0a] to-[#ffc53d]" />
      <div className="h-[86px] border-b border-[#8c9096] bg-linear-to-b from-white to-[#eef0f3]" />
      <div className="h-8 bg-[#e9ecf3]" />
      <div className="ml-1.5 h-px bg-[#8c9096]" />
      <div className="h-[30px] bg-[#e6eaf0]" />
      <div className="ml-1.5 h-4 bg-[#c3ccdb]" />
      <div className="flex-1 bg-linear-to-b from-[#e6eaf0] to-[#d5dae0]" />
      <div className="h-[22px] border-t border-[#8c9096] bg-linear-to-b from-[#eceef1] to-[#b6bcc4]" />
      <div className="h-[31px] bg-black" />
    </div>
  );
}

export default function App() {
  return (
    <div className={"flex min-h-screen text-[11px] leading-[13px] text-[#3c3c3c] " + FONT}>
      <div className="flex min-w-0 flex-1 flex-col bg-[#e3e3e3]">
        <TitleBar />
        <Ribbon />
        <DocumentTabs />
        <div className="flex flex-1 border-y-2 border-[#ababab]">
          <ParametersPanel />
          <DataGrid />
          <ColumnChooser />
        </div>
        <StatusBar />
      </div>
      <BackWindowEdge />
    </div>
  );
}
